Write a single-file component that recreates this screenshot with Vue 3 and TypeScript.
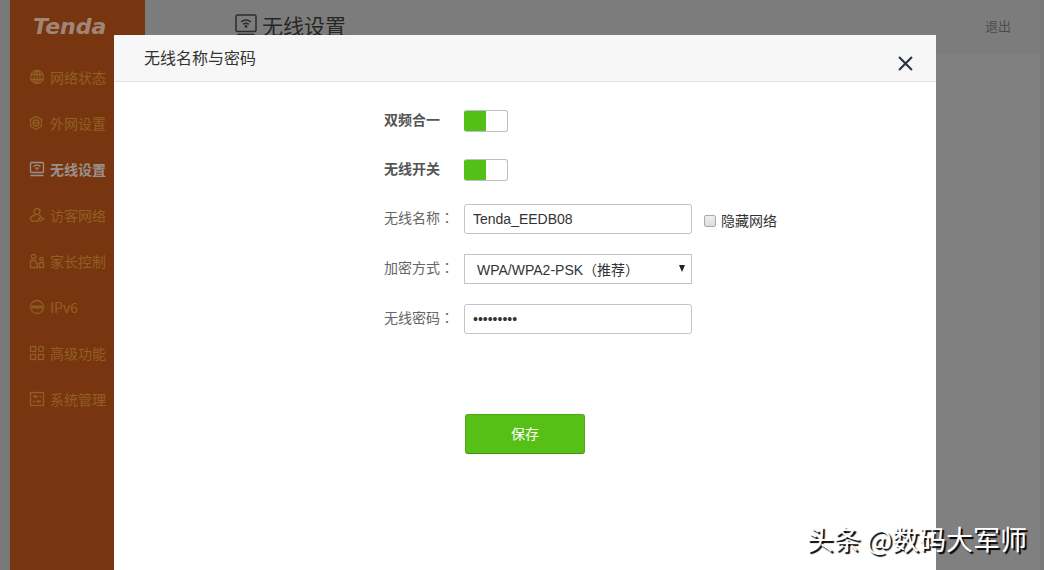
<script setup lang="ts">
import { ref } from 'vue'

interface NavItem {
  id: string
  label: string
}

const navItems: NavItem[] = [
  { id: 'status', label: '网络状态' },
  { id: 'wan', label: '外网设置' },
  { id: 'wifi', label: '无线设置' },
  { id: 'guest', label: '访客网络' },
  { id: 'parent', label: '家长控制' },
  { id: 'ipv6', label: 'IPv6' },
  { id: 'advanced', label: '高级功能' },
  { id: 'system', label: '系统管理' },
]

const active = ref('wifi')
const dualBand = ref(true)
const wifiOn = ref(true)
const ssid = ref('Tenda_EEDB08')
const hidden = ref(false)
const security = ref('wpa-mixed')
const password = ref('router123')
</script>

<template>
  <div class="page">
    <aside class="sidebar">
      <div class="logo">Tenda</div>
      <nav>
        <a
          v-for="item in navItems"
          :key="item.id"
          href="#"
          class="nav-item"
          :class="{ active: item.id === active }"
          @click.prevent="active = item.id"
        >
          <svg class="nav-icon" viewBox="0 0 16 16" aria-hidden="true">
            <g v-if="item.id === 'status'">
              <circle cx="8" cy="8" r="6.5" />
              <ellipse cx="8" cy="8" rx="3" ry="6.5" />
              <path d="M8 1.5v13M2 5.5h12M2 10.5h12" />
            </g>
            <g v-else-if="item.id === 'wan'">
              <path d="M7 1.5l5.5 3V11L7 14.5 1.5 11V4.5z" />
              <circle cx="7" cy="8" r="3" />
              <path d="M5 8h4" />
            </g>
            <g v-else-if="item.id === 'wifi'">
              <rect x="1.5" y="1.5" width="13" height="10" rx="1" />
              <path d="M1.500 14.500h13M4.500 5.500q3.500-2.600 7 0M6.300 7.500q1.700-1.300 3.400 0M7.500 9h1" />
            </g>
            <g v-else-if="item.id === 'guest'">
              <circle cx="8" cy="4.500" r="3" />
              <path d="M6 8.500H5Q1.500 9 1.500 12q0 2 2 2H10M10 8.500q1.200.2 2 1" />
              <path d="M9.500 11.700l2.200-1.500 3 1.500-3 2z" />
            </g>
            <g v-else-if="item.id === 'parent'">
              <circle cx="4.500" cy="3.500" r="2.200" />
              <path d="M1.500 14.500V7.500h4q1.500 0 1.500 2.500l1.500 2v2.500z" />
              <circle cx="12.500" cy="6" r="1.700" />
              <path d="M9 9.500l1.500 1.500 1.500-1.500h2.500v5h-4V12" />
            </g>
            <g v-else-if="item.id === 'ipv6'">
              <circle cx="8" cy="8" r="6.500" />
              <path d="M3.500 7.200h2.500v1.600H3.500zM7 7.200h2v1.600H7zM10 7.200h2.500v1.600H10z" />
            </g>
            <g v-else-if="item.id === 'advanced'">
              <rect x="1.500" y="1.500" width="5" height="5" />
              <circle cx="12" cy="4" r="2.600" />
              <rect x="1.500" y="9.500" width="5" height="5" />
              <rect x="9.500" y="9.500" width="5" height="5" />
            </g>
            <g v-else>
              <rect x="1.500" y="1.500" width="13" height="13" />
              <path d="M4 5.500h5M6.500 4v3M10.500 5.500H12M4 10.500h2M7.500 10.500H12M9.500 9v3" />
            </g>
          </svg>
          <span>{{ item.label }}</span>
        </a>
      </nav>
    </aside>
    <main class="content">
      <header class="topbar">
        <h1>
          <svg class="title-icon" viewBox="0 0 22 22" aria-hidden="true">
            <rect x="1" y="1" width="20" height="16.500" rx="1.500" />
            <path d="M2.500 20.500h17M6.200 7.800q4.800-3.800 9.600 0M8.200 10.300q2.800-2.200 5.600 0" />
            <circle cx="11" cy="12.500" r="0.700" />
          </svg>
          <span>无线设置</span>
        </h1>
        <a href="#" class="logout" @click.prevent>退出</a>
      </header>
    </main>

    <div class="overlay">
      <section class="dialog" role="dialog" aria-labelledby="dialog-title">
        <header class="dialog-head">
          <h2 id="dialog-title">无线名称与密码</h2>
          <button type="button" class="close" aria-label="关闭">
            <svg viewBox="0 0 14 14" aria-hidden="true"><path d="M1 1l12 12M13 1L1 13" /></svg>
          </button>
        </header>
        <form class="form" @submit.prevent>
          <div class="row toggle-row">
            <label for="dual">双频合一</label>
            <input id="dual" v-model="dualBand" type="checkbox" class="toggle" />
          </div>
          <div class="row toggle-row">
            <label for="wifi">无线开关</label>
            <input id="wifi" v-model="wifiOn" type="checkbox" class="toggle" />
          </div>
          <div class="row">
            <label for="ssid">无线名称<span class="colon">：</span></label>
            <input id="ssid" v-model="ssid" type="text" class="field" />
            <span class="hide-net">
              <input id="hide" v-model="hidden" type="checkbox" class="check" />
              <label for="hide">隐藏网络</label>
            </span>
          </div>
          <div class="row">
            <label for="security">加密方式<span class="colon">：</span></label>
            <span class="select-box">
              <select id="security" v-model="security" class="field">
                <option value="wpa-mixed">WPA/WPA2-PSK（推荐）</option>
              </select>
              <svg class="arrow" viewBox="0 0 6 7" aria-hidden="true"><path d="M0 0h6L3 7z" /></svg>
            </span>
          </div>
          <div class="row">
            <label for="password">无线密码<span class="colon">：</span></label>
            <input id="password" v-model="password" type="password" class="field" />
          </div>
          <button type="submit" class="save">保存</button>
        </form>
      </section>
    </div>

    <div class="watermark">头条 @数码大军师</div>
  </div>
</template>

<style>
body {
  background: #7b7b7b;
}
</style>

<style scoped>
.page {
  position: relative;
  display: flex;
  min-height: 100vh;
  padding: 0 4px 0 10px;
  box-sizing: border-box;
  overflow: hidden;
  background: #787878;
  font: 14px/20px "Liberation Sans", "Noto Sans CJK SC", sans-serif;
}
.sidebar {
  width: 135px;
  flex: none;
  background: #783610;
}
.logo {
  height: 54px;
  padding-left: 23px;
  color: #a18678;
  font: italic bold 22px/54px "DejaVu Sans", sans-serif;
}
.nav-item {
  display: flex;
  align-items: center;
  gap: 5px;
  height: 46px;
  padding-left: 19px;
  color: #925f22;
  font-family: "Noto Sans CJK SC", sans-serif;
  text-decoration: none;
}
.nav-icon {
  width: 16px;
  height: 16px;
  flex: none;
  fill: none;
  stroke: currentColor;
  stroke-width: 1.3;
}
.nav-item.active {
  color: #9b918c;
  font-weight: bold;
}
.content {
  flex: 1;
  background: #808080;
}
.topbar {
  display: flex;
  align-items: center;
  justify-content: space-between;
  height: 53px;
  padding: 0 29px 0 90px;
  border-bottom: 1px solid #7d7d7d;
  background: #7c7c7c;
}
h1 {
  display: flex;
  align-items: center;
  gap: 5px;
  margin: 0;
  color: #262626;
  font-size: 21px;
  font-weight: normal;
  line-height: 30px;
}
.title-icon {
  width: 22px;
  height: 22px;
  margin-bottom: 4px;
  fill: none;
  stroke: #2d2d2d;
  stroke-width: 1.5;
}
.logout {
  color: #4c4c4c;
  font-size: 13px;
  text-decoration: none;
}
.overlay {
  position: absolute;
  inset: 0;
  display: flex;
  padding: 35px 108px 0 114px;
}
.dialog {
  flex: 1;
  background: #fff;
}
.dialog-head {
  display: flex;
  align-items: center;
  justify-content: space-between;
  height: 46px;
  padding: 0 18px 0 30px;
  border-bottom: 1px solid #e3e3e3;
  background: #f7f7f7;
}
h2 {
  margin: 2px 0 0;
  color: #333;
  font-size: 16px;
  font-weight: normal;
  line-height: 24px;
}
.close {
  display: flex;
  margin-top: 10px;
  padding: 5px;
  border: 0;
  background: none;
}
.close svg {
  width: 15px;
  height: 15px;
  fill: none;
  stroke: #2b343d;
  stroke-width: 2;
}
.form {
  display: flex;
  flex-direction: column;
  gap: 20px;
  padding: 24px 0 40px 270px;
  color: #666;
}
.row {
  display: flex;
  align-items: center;
  height: 30px;
}
.row > label {
  width: 80px;
  flex: none;
  padding-bottom: 4px;
}
.toggle-row {
  height: 29px;
}
.toggle-row > label {
  padding-bottom: 2px;
  color: #555;
  font-weight: bold;
}
.colon {
  font-family: "Noto Sans CJK TC", sans-serif;
}
.toggle {
  appearance: none;
  width: 44px;
  height: 22px;
  margin: 0;
  border: 1px solid #bbc0c4;
  border-radius: 3px;
  background: #fff;
}
.toggle:checked {
  border-left-color: #54bf16;
  background: linear-gradient(to right, #54bf16 50%, #fff 50%);
}
.field {
  appearance: none;
  box-sizing: border-box;
  width: 228px;
  height: 30px;
  margin: 0;
  padding: 0 8px;
  border: 1px solid #c3c4c9;
  border-radius: 3px;
  background: #fff;
  color: #333;
  font: 14px/20px "Liberation Sans", "Noto Sans CJK TC", sans-serif;
}
.select-box {
  position: relative;
  display: flex;
}
select.field {
  padding: 2px 12px 0;
  border-radius: 0;
}
.arrow {
  position: absolute;
  top: 11px;
  right: 7px;
  width: 6px;
  height: 7px;
  fill: #222;
}
.hide-net {
  display: flex;
  align-items: center;
  gap: 5px;
  margin: 4px 0 0 12px;
  color: #333;
}
.check {
  appearance: none;
  box-sizing: border-box;
  width: 12px;
  height: 12px;
  margin: 0;
  border: 1px solid #aaa;
  border-radius: 2px;
  background: linear-gradient(#eee, #ddd);
}
.save {
  width: 120px;
  height: 40px;
  margin: 60px 0 0 81px;
  padding: 0 0 2px;
  border: 1px solid #4caa16;
  border-bottom-color: #3f8f12;
  border-radius: 3px;
  background: #57c016;
  color: #fff;
  font: 14px/20px "Noto Sans CJK SC", sans-serif;
}
.watermark {
  position: absolute;
  right: 17px;
  bottom: 11px;
  color: #fff;
  font: 27px/40px "Noto Sans CJK SC", sans-serif;
  text-shadow: 2px 2px 1px #000;
}
</style>
